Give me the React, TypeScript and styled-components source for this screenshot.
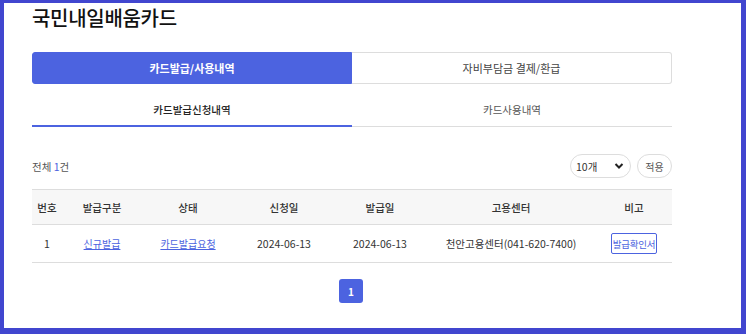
import React from "react";
import styled, { createGlobalStyle } from "styled-components";

const Global = createGlobalStyle`
  html, body { margin: 0; padding: 0; background: #fff; }
  body { font-family: "Noto Sans CJK KR", "Noto Sans", sans-serif; color: #222; }
  * { box-sizing: border-box; }
`;

const Frame = styled.div`
  width: 746px;
  height: 334px;
  border-style: solid;
  border-color: #4146cf;
  border-width: 3px 5px 6px 4px;
  background: #fff;
  padding: 0 0 0 28px;
  overflow: hidden;
`;

const Content = styled.div`
  width: 640px;
  display: flex;
  flex-direction: column;
`;

const Title = styled.h1`
  margin: 0;
  height: 49px;
  padding-top: 2px;
  font-size: 20px;
  font-weight: 500;
  color: #111;
  line-height: 26px;
  letter-spacing: -0.3px;
`;

const TabBar = styled.div`
  display: grid;
  grid-template-columns: 320px 320px;
  height: 32px;
`;

const Tab = styled.div<{ $active?: boolean }>`
  display: flex;
  align-items: center;
  justify-content: center;
  font-size: 11px;
  font-weight: ${(p) => (p.$active ? 700 : 400)};
  color: ${(p) => (p.$active ? "#fff" : "#444")};
  background: ${(p) => (p.$active ? "#4c63e0" : "#fff")};
  border: 1px solid ${(p) => (p.$active ? "#4c63e0" : "#ddd")};
  border-radius: ${(p) => (p.$active ? "3px 0 0 3px" : "0 3px 3px 0")};
  border-left-width: ${(p) => (p.$active ? "1px" : "0")};
`;

const SubTabBar = styled.div`
  display: grid;
  grid-template-columns: 320px 320px;
  height: 34px;
  margin-top: 9px;
  border-bottom: 1px solid #ddd;
`;

const SubTab = styled.div<{ $active?: boolean }>`
  display: flex;
  align-items: center;
  justify-content: center;
  padding-top: 1px;
  font-size: 10.5px;
  font-weight: ${(p) => (p.$active ? 500 : 400)};
  color: ${(p) => (p.$active ? "#222" : "#555")};
  border-bottom: 2px solid ${(p) => (p.$active ? "#4c63e0" : "transparent")};
  margin-bottom: -1px;
`;

const ListHead = styled.div`
  display: flex;
  align-items: center;
  justify-content: space-between;
  margin-top: 27px;
  height: 24px;
`;

const Count = styled.span`
  font-size: 10.5px;
  color: #555;
  b { font-weight: 400; color: #4c63e0; }
`;

const Controls = styled.div`
  display: flex;
  gap: 6px;
`;

const Select = styled.div`
  width: 61px;
  height: 24px;
  border: 1px solid #ddd;
  border-radius: 12px;
  display: flex;
  align-items: center;
  justify-content: space-between;
  padding: 0 6px 0 5px;
  font-size: 10.5px;
  color: #333;
`;

const PillButton = styled.button`
  width: 35px;
  height: 24px;
  border: 1px solid #ddd;
  border-radius: 12px;
  background: #fff;
  font-family: inherit;
  font-size: 10px;
  color: #555;
  padding: 0;
`;

const Table = styled.table`
  margin-top: 11px;
  width: 640px;
  border-collapse: collapse;
  table-layout: fixed;
  font-size: 10.5px;
`;

const Th = styled.th`
  height: 35px;
  background: #f7f7f7;
  border-top: 1px solid #ddd;
  border-bottom: 1px solid #ddd;
  font-weight: 500;
  color: #333;
  text-align: center;
  padding: 0;
`;

const Td = styled.td`
  height: 38px;
  border-bottom: 1px solid #ddd;
  text-align: center;
  color: #333;
  padding: 0;
`;

const LinkText = styled.a`
  color: #4c63e0;
  text-decoration: underline;
  font-size: 10px;
`;

const OutlineBtn = styled.span`
  display: inline-flex;
  align-items: center;
  height: 21px;
  padding: 0 1px;
  border: 1px solid #4c63e0;
  border-radius: 2px;
  color: #4c63e0;
  font-size: 9.5px;
  letter-spacing: -0.2px;
`;

const Pager = styled.div`
  display: flex;
  justify-content: center;
  margin-top: 16px;
`;

const PageBtn = styled.div`
  width: 24px;
  height: 24px;
  border-radius: 3px;
  background: #4c63e0;
  color: #fff;
  font-size: 10px;
  font-weight: 700;
  display: flex;
  align-items: center;
  justify-content: center;
  margin-right: 2px;
`;

const cols = [30, 80, 92, 100, 92, 170, 76];

export default function App() {
  return (
    <>
      <Global />
      <Frame>
        <Content>
          <Title>국민내일배움카드</Title>
          <TabBar>
            <Tab $active>카드발급/사용내역</Tab>
            <Tab>자비부담금 결제/환급</Tab>
          </TabBar>
          <SubTabBar>
            <SubTab $active>카드발급신청내역</SubTab>
            <SubTab>카드사용내역</SubTab>
          </SubTabBar>
          <ListHead>
            <Count>
              전체 <b>1</b>건
            </Count>
            <Controls>
              <Select>
                <span>10개</span>
                <svg width="10" height="8" viewBox="0 0 10 8">
                  <path d="M1.5 2 L5 5.5 L8.5 2" fill="none" stroke="#222" strokeWidth="2" />
                </svg>
              </Select>
              <PillButton>적용</PillButton>
            </Controls>
          </ListHead>
          <Table>
            <colgroup>
              {cols.map((w, i) => (
                <col key={i} style={{ width: w }} />
              ))}
            </colgroup>
            <thead>
              <tr>
                <Th>번호</Th>
                <Th>발급구분</Th>
                <Th>상태</Th>
                <Th>신청일</Th>
                <Th>발급일</Th>
                <Th>고용센터</Th>
                <Th>비고</Th>
              </tr>
            </thead>
            <tbody>
              <tr>
                <Td>1</Td>
                <Td>
                  <LinkText>신규발급</LinkText>
                </Td>
                <Td>
                  <LinkText>카드발급요청</LinkText>
                </Td>
                <Td>2024-06-13</Td>
                <Td>2024-06-13</Td>
                <Td>천안고용센터(041-620-7400)</Td>
                <Td>
                  <OutlineBtn>발급확인서</OutlineBtn>
                </Td>
              </tr>
            </tbody>
          </Table>
          <Pager>
            <PageBtn>1</PageBtn>
          </Pager>
        </Content>
      </Frame>
    </>
  );
}
